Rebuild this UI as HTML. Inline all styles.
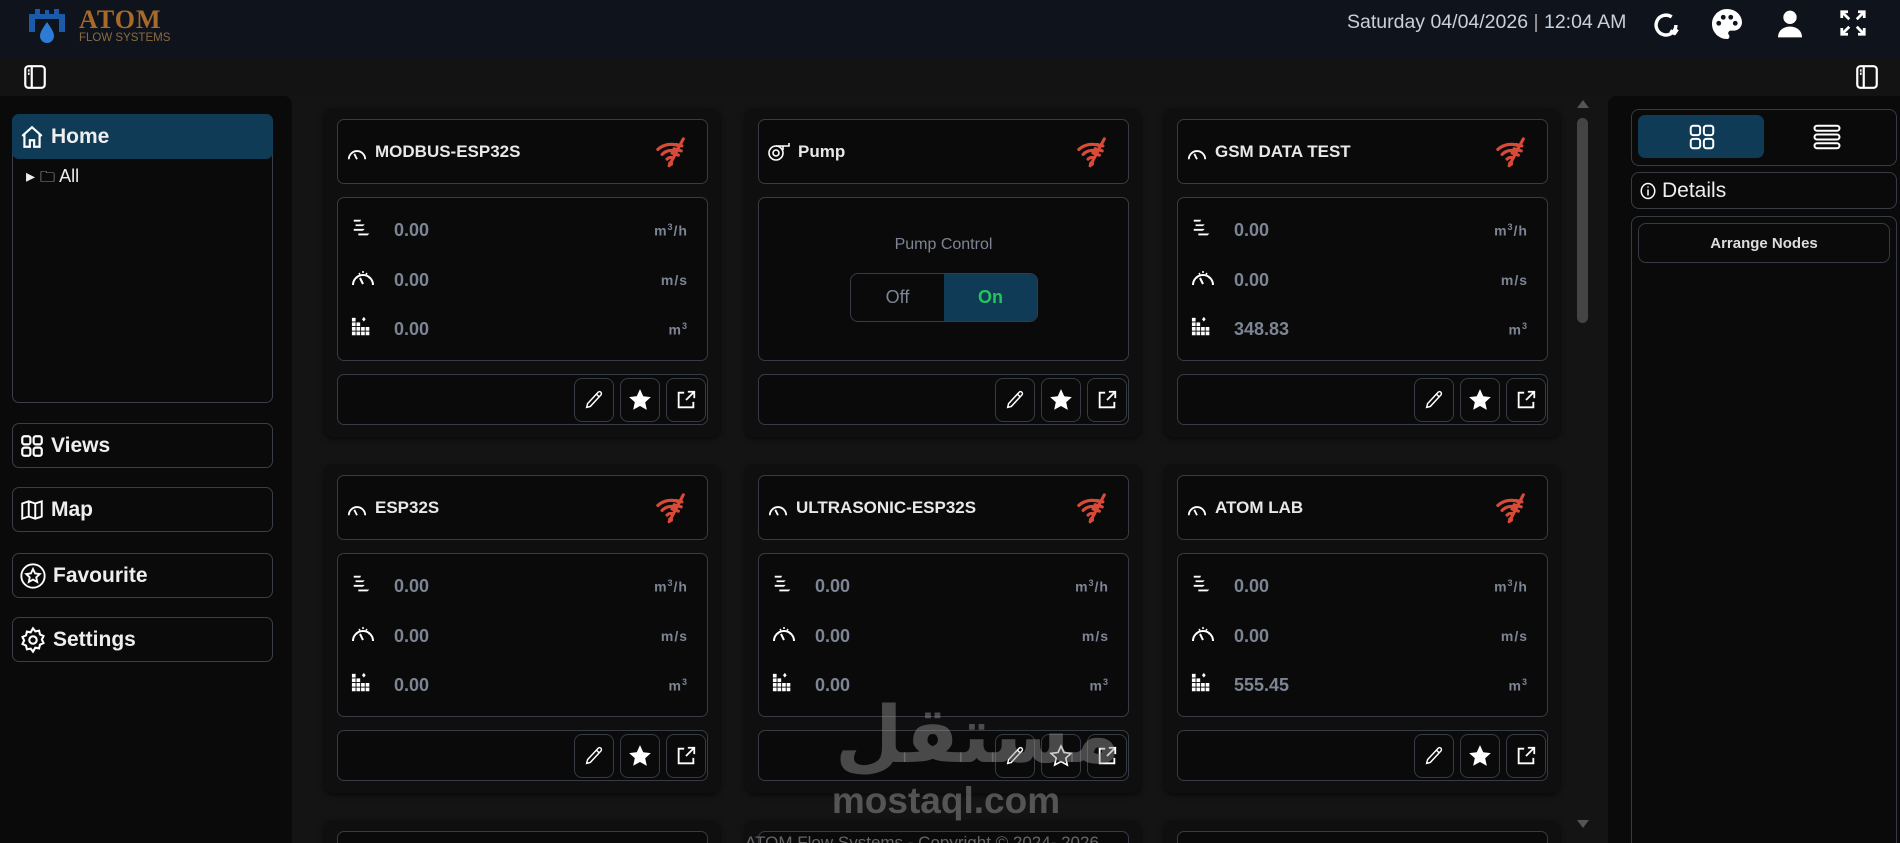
<!DOCTYPE html>
<html><head><meta charset="utf-8"><style>
*{box-sizing:border-box;margin:0;padding:0}
html,body{width:1900px;height:843px;overflow:hidden}
body{background:#141414;font-family:"Liberation Sans",Arial,sans-serif;color:#e5e7eb;position:relative}
#wrap{position:absolute;left:0;top:0;width:1900px;height:843px;overflow:hidden}
.abs{position:absolute}
.hdr{left:0;top:0;width:1900px;height:58px;background:#0f141c}
.bar2{left:0;top:58px;width:1900px;height:38px;background:#131313}
.side{left:0;top:96px;width:292px;height:747px;background:#0a0a0a;border-radius:0 8px 0 0}
.rp{left:1608px;top:96px;width:292px;height:747px;background:#0a0a0a;border-radius:8px 0 0 0}
.nav{left:12px;width:261px;height:45px;border:1px solid #3a3f47;border-radius:7px;display:flex;align-items:center;padding-left:6px;font-size:21px;font-weight:bold;color:#eee}
.nav svg{margin-right:6px}
.card{width:396px;height:329px;background:#0f0f0f;border-radius:9px;box-shadow:0 2px 6px rgba(0,0,0,.6)}
.box{position:absolute;left:13px;width:371px;border:1px solid #363b44;border-radius:7px;background:#0a0a0a}
.ttl{top:11px;height:65px;display:flex;align-items:center;padding-left:8px;font-weight:bold;font-size:17px;color:#e8e8e8}
.ttl svg.t{margin-right:7px}
.wf{position:absolute;right:18px;top:16px}
.data{top:89px;height:164px}
.row{position:absolute;left:0;width:100%;height:30px;display:flex;align-items:center}
.row .ic{position:absolute;left:13px}
.row .v{position:absolute;left:56px;font-size:18px;font-weight:bold;color:#7d8594}
.row .u{position:absolute;right:19px;font-size:14px;font-weight:bold;color:#7d8594;letter-spacing:1px}
.row .u sup{font-size:9px}
.ftr{top:266px;height:51px}
.btn{position:absolute;top:3px;width:40px;height:44px;border:1px solid #363b44;border-radius:8px;display:flex;align-items:center;justify-content:center}
</style></head><body><div id="wrap">
<div class="abs hdr"></div>
<svg class="abs" style="left:27px;top:6px" width="40" height="40" viewBox="0 0 40 40"><path d="M2 26V8h6v-5h5v5h5V4h4v4h5V3h5v5h6v18h-6V13H8v13z" fill="#1a5aa8"/><path d="M20 16c-4 6-7 10-7 14a7 7 0 0014 0c0-4-3-8-7-14z" fill="#2c7bd6"/></svg>
<div class="abs" style="left:79px;top:5px;font-size:26px;font-weight:bold;color:#a86a2a;font-family:'Liberation Serif',serif;letter-spacing:1px">ATOM</div>
<div class="abs" style="left:79px;top:32px;font-size:11.5px;color:#8a6a40">FLOW SYSTEMS</div>
<div class="abs" style="left:1347px;top:11px;font-size:19.5px;color:#cbd0d8">Saturday 04/04/2026 <span style="color:#aaa">|</span> 12:04 AM</div>
<svg class="abs" style="left:1648px;top:8px" width="36" height="34" viewBox="0 0 24 24" fill="none" stroke="#fff" stroke-width="2.4"><path d="M19 12a7 7 0 1 1-3-5.7"/><path d="M20 15l-2 3-3-2" stroke-linejoin="round"/></svg>
<svg class="abs" style="left:1709px;top:6px" width="36" height="36" viewBox="0 0 24 24"><path d="M12 2C6.5 2 2 6.5 2 12s4.5 10 10 10c1 0 1.6-.8 1.6-1.7 0-.4-.2-.8-.4-1.1-.3-.3-.4-.7-.4-1.1 0-.9.8-1.7 1.7-1.7h2c3 0 5.5-2.500 5.5-5.5C22 6 17.5 2 12 2z" fill="#fff"/><circle cx="6.5" cy="11.5" r="1.6" fill="#0f141c"/><circle cx="9.5" cy="7.5" r="1.6" fill="#0f141c"/><circle cx="14.5" cy="7.5" r="1.6" fill="#0f141c"/><circle cx="17.5" cy="11.5" r="1.6" fill="#0f141c"/></svg>
<svg class="abs" style="left:1774px;top:8px" width="32" height="32" viewBox="0 0 24 24" fill="#fff"><circle cx="12" cy="7" r="5"/><path d="M3 22c0-5 4-8 9-8s9 3 9 8z"/></svg>
<svg class="abs" style="left:1838px;top:8px" width="30" height="30" viewBox="0 0 24 24" fill="none" stroke="#fff" stroke-width="2.2"><path d="M3 8V3h5M3 3l6 6M21 8V3h-5M21 3l-6 6M3 16v5h5M3 21l6-6M21 16v5h-5M21 21l-6-6"/></svg>
<div class="abs bar2"></div>
<svg class="abs" style="left:22px;top:64px" width="26" height="26" viewBox="0 0 24 24" fill="none" stroke="#fff" stroke-width="2"><rect x="3" y="2" width="18" height="20" rx="3"/><path d="M9 2v20M5.5 6h1.5M5.5 9h1.5"/></svg>
<svg class="abs" style="left:1854px;top:64px" width="26" height="26" viewBox="0 0 24 24" fill="none" stroke="#fff" stroke-width="2"><rect x="3" y="2" width="18" height="20" rx="3"/><path d="M9 2v20M5.5 6h1.5M5.5 9h1.5"/></svg>
<div class="abs side"></div>
<div class="abs" style="left:12px;top:114px;width:261px;height:289px;border:1px solid #3a3f47;border-radius:7px"></div>
<div class="abs nav" style="top:114px;background:#0f3b56;border-color:#0f3b56"><svg width="26" height="26" viewBox="0 0 24 24" fill="none" stroke="#fff" stroke-width="2"><path d="M3 11L12 3l9 8M5 9v12h5v-6h4v6h5V9"/></svg>Home</div>
<div class="abs" style="left:26px;top:166px;font-size:18px;color:#eee">▸ <span style="font-size:15px">🗀</span> All</div>
<div class="abs nav" style="top:423px"><svg width="26" height="26" viewBox="0 0 24 24" fill="none" stroke="#fff" stroke-width="2"><rect x="3" y="3" width="7.5" height="7.5" rx="2"/><rect x="13.5" y="3" width="7.5" height="7.5" rx="2"/><rect x="3" y="13.5" width="7.5" height="7.5" rx="2"/><rect x="13.5" y="13.5" width="7.5" height="7.5" rx="2"/></svg>Views</div>
<div class="abs nav" style="top:487px"><svg width="26" height="26" viewBox="0 0 24 24" fill="none" stroke="#fff" stroke-width="1.8"><path d="M3 6l6-2 6 2 6-2v14l-6 2-6-2-6 2zM9 4v14M15 6v14"/></svg>Map</div>
<div class="abs nav" style="top:553px"><svg width="28" height="28" viewBox="0 0 24 24" fill="none" stroke="#fff" stroke-width="1.6"><circle cx="12" cy="12" r="10"/><path d="M12 6l1.8 3.8 4 .5-3 2.8.8 4-3.6-2-3.6 2 .8-4-3-2.8 4-.5z"/></svg>Favourite</div>
<div class="abs nav" style="top:617px"><svg width="28" height="28" viewBox="0 0 24 24" fill="none" stroke="#fff" stroke-width="1.8"><circle cx="12" cy="12" r="3.2"/><path d="M12 2l2 2.6 3.2-.6.8 3.2 3 1.4-1.4 3 1.4 3-3 1.4-.8 3.2-3.2-.6L12 22l-2-2.6-3.2.6-.8-3.2-3-1.4 1.4-3-1.4-3 3-1.4.8-3.2 3.2.6z"/></svg>Settings</div>

<div id="cards"></div>
<div class="abs" style="left:1577px;top:100px;width:0;height:0;border-left:6px solid transparent;border-right:6px solid transparent;border-bottom:8px solid #555"></div>
<div class="abs" style="left:1577px;top:118px;width:11px;height:205px;background:#444;border-radius:6px"></div>
<div class="abs" style="left:1577px;top:820px;width:0;height:0;border-left:6px solid transparent;border-right:6px solid transparent;border-top:8px solid #555"></div>
<div class="abs" style="left:745px;top:833px;font-size:17px;color:#666">ATOM Flow Systems - Copyright © 2024- 2026</div>

<div class="abs rp"></div>
<div class="abs" style="left:1631px;top:109px;width:266px;height:57px;border:1px solid #363b44;border-radius:8px"></div>
<div class="abs" style="left:1638px;top:115px;width:126px;height:43px;background:#0f3b56;border-radius:7px"></div>
<svg class="abs" style="left:1687px;top:122px" width="30" height="30" viewBox="0 0 24 24" fill="none" stroke="#fff" stroke-width="1.6"><rect x="3" y="3" width="7.5" height="7.5" rx="2"/><rect x="13.5" y="3" width="7.5" height="7.5" rx="2"/><rect x="3" y="13.5" width="7.5" height="7.5" rx="2"/><rect x="13.5" y="13.5" width="7.5" height="7.5" rx="2"/></svg>
<svg class="abs" style="left:1812px;top:122px" width="30" height="30" viewBox="0 0 24 24" fill="none" stroke="#fff" stroke-width="1.6"><rect x="2" y="3" width="20" height="4" rx="2"/><rect x="2" y="10" width="20" height="4" rx="2"/><rect x="2" y="17" width="20" height="4" rx="2"/></svg>
<div class="abs" style="left:1631px;top:172px;width:266px;height:37px;border:1px solid #363b44;border-radius:8px;display:flex;align-items:center;padding-left:7px;font-size:21px;color:#eee"><svg width="18" height="20" viewBox="0 0 24 24" fill="none" stroke="#fff" stroke-width="2" style="margin-right:5px"><ellipse cx="12" cy="12" rx="9" ry="10"/><path d="M12 10v8M12 6v1.5"/></svg>Details</div>
<div class="abs" style="left:1631px;top:216px;width:266px;height:640px;border:1px solid #363b44;border-radius:8px"></div>
<div class="abs" style="left:1638px;top:223px;width:252px;height:40px;border:1px solid #363b44;border-radius:8px;display:flex;align-items:center;justify-content:center;font-size:15px;font-weight:bold;color:#ddd">Arrange Nodes</div>

<div class="abs" style="left:835px;top:690px;width:230px;text-align:center;font-size:78px;font-weight:bold;color:rgba(150,150,150,.45);font-family:'Noto Sans CJK SC','DejaVu Sans',sans-serif;line-height:1">مستقل</div>
<div class="abs" style="left:816px;top:780px;width:260px;text-align:center;font-size:37px;font-weight:bold;color:rgba(150,150,150,.5)">mostaql.com</div>
</div>
<script>
const wifi='<svg class="wf" width="34" height="34" viewBox="0 0 24 24" fill="none" stroke="#d94a38" stroke-width="2.2" stroke-linecap="round"><path d="M2 9.5a14 14 0 0 1 15-2.5M5 13a9 9 0 0 1 9-2.5M8.5 16.3a4 4 0 0 1 4-1"/><circle cx="11" cy="19.5" r="1.8" fill="#d94a38" stroke="none"/><path d="M10 21L20 2M15 6l4 1M13.5 9l5 1.5M12 12l4.5 1.5"/></svg>';
const gauge='<svg class="t" width="22" height="20" viewBox="0 0 24 22" fill="none" stroke="#fff" stroke-width="2"><path d="M3 19a9 9 0 1 1 18 0"/><path d="M12 19l-3-6"/></svg>';
const pump='<svg class="t" width="24" height="22" viewBox="0 0 24 22" fill="none" stroke="#fff" stroke-width="1.6"><circle cx="9" cy="12" r="7"/><circle cx="9" cy="12" r="3"/><path d="M9 5h13V2M16 5v4"/></svg>';
const flow='<svg width="22" height="22" viewBox="0 0 24 24" fill="#fff"><path d="M3 3h8l-1 2H3zM5 8h10l-2 2H5zM3 13h12l-2 2H3zM8 18h12l-2 2H8z"/></svg>';
const speed='<svg width="24" height="22" viewBox="0 0 24 22" fill="none" stroke="#fff" stroke-width="2"><path d="M2 18a10 10 0 1 1 20 0"/><path d="M12 17l-3-6" /><path d="M5 10l1.5 1M19 10l-1.5 1M12 4v2M8 6l1 1.5M16 6l-1 1.5" stroke-width="1.5"/></svg>';
const vol='<svg width="22" height="22" viewBox="0 0 24 24" fill="#fff"><rect x="1" y="2" width="4" height="4"/><rect x="1" y="7" width="4" height="4"/><rect x="6" y="7" width="4" height="4"/><rect x="1" y="12" width="4" height="4"/><rect x="6" y="12" width="4" height="4"/><rect x="11" y="12" width="4" height="4"/><rect x="16" y="12" width="4" height="4"/><rect x="1" y="17" width="4" height="4"/><rect x="6" y="17" width="4" height="4"/><rect x="11" y="17" width="4" height="4"/><rect x="16" y="17" width="4" height="4"/><path d="M14 1l2 2.5L14 6l-2-2.5z"/></svg>';
const pen='<svg width="22" height="22" viewBox="0 0 24 24" fill="none" stroke="#fff" stroke-width="1.6"><path d="M16.5 3.5a2.1 2.1 0 0 1 3 3L8 19l-4 1 1-4z"/><path d="M14.5 5.5l3 3"/></svg>';
const starF='<svg width="26" height="26" viewBox="0 0 24 24" fill="#fff"><path d="M12 2l3 6.5 7 .8-5.2 4.8 1.5 7L12 17.5 5.7 21l1.5-7L2 9.3l7-.8z"/></svg>';
const starO='<svg width="24" height="24" viewBox="0 0 24 24" fill="none" stroke="#fff" stroke-width="1.6"><path d="M12 2l3 6.5 7 .8-5.2 4.8 1.5 7L12 17.5 5.7 21l1.5-7L2 9.3l7-.8z"/></svg>';
const ext='<svg width="22" height="22" viewBox="0 0 24 24" fill="none" stroke="#fff" stroke-width="2"><path d="M10 4H4v16h16v-6M14 3h7v7M21 3l-9 9"/></svg>';
const cards=[
 [324,108,'MODBUS-ESP32S',gauge,['0.00','0.00','0.00'],1],
 [745,108,'Pump',pump,null,1],
 [1164,108,'GSM DATA TEST',gauge,['0.00','0.00','348.83'],1],
 [324,464,'ESP32S',gauge,['0.00','0.00','0.00'],1],
 [745,464,'ULTRASONIC-ESP32S',gauge,['0.00','0.00','0.00'],0],
 [1164,464,'ATOM LAB',gauge,['0.00','0.00','555.45'],1]];
let h='';
for(const [x,y,t,ic,v,fav] of cards){
 h+=`<div class="abs card" style="left:${x}px;top:${y}px">`;
 h+=`<div class="box ttl">${ic}${t}${wifi}</div>`;
 h+=`<div class="box data">`;
 if(v){
  const ics=[flow,speed,vol],us=['m<sup>3</sup>/h','m/s','m<sup>3</sup>'],ys=[17,67,116];
  for(let i=0;i<3;i++)h+=`<div class="row" style="top:${ys[i]}px"><span class="ic">${ics[i]}</span><span class="v">${v[i]}</span><span class="u">${us[i]}</span></div>`;
 } else {
  h+=`<div style="position:absolute;top:38px;width:100%;text-align:center;font-size:16px;color:#7d8594">Pump Control</div>
  <div style="position:absolute;left:91px;top:75px;width:188px;height:49px;border:1px solid #363b44;border-radius:8px;overflow:hidden;display:flex">
  <div style="width:93px;display:flex;align-items:center;justify-content:center;color:#7d8594;font-size:18px">Off</div>
  <div style="flex:1;background:#0f3b56;display:flex;align-items:center;justify-content:center;color:#22c55e;font-weight:bold;font-size:18px">On</div></div>`;
 }
 h+=`</div><div class="box ftr">
 <div class="btn" style="left:236px">${pen}</div>
 <div class="btn" style="left:282px">${fav?starF:starO}</div>
 <div class="btn" style="left:328px">${ext}</div></div></div>`;
}
for(const x of [324,745,1164])h+=`<div class="abs card" style="left:${x}px;top:820px"><div class="box" style="top:11px;height:60px"></div></div>`;
document.getElementById('cards').innerHTML=h;
</script>
</body></html>
